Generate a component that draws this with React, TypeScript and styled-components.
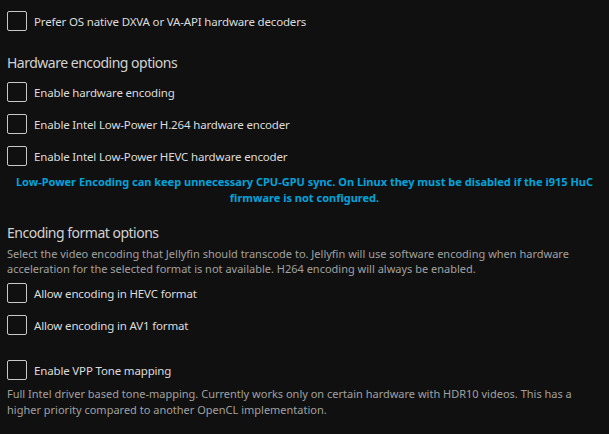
import React from "react";
import styled, { createGlobalStyle } from "styled-components";

const Global = createGlobalStyle`
  html, body { margin: 0; padding: 0; background: #101010; }
  body { font-family: "Noto Sans", "DejaVu Sans", sans-serif; -webkit-font-smoothing: antialiased; }
`;

const Page = styled.div`
  width: 609px;
  height: 434px;
  box-sizing: border-box;
  padding: 5px 7px 0 7px;
  background: #101010;
  overflow: hidden;
`;

const Row = styled.label<{ $mt?: number }>`
  display: flex;
  align-items: center;
  gap: 7px;
  height: 32px;
  margin-top: ${(p) => p.$mt ?? 0}px;
`;

const Box = styled.span`
  box-sizing: border-box;
  width: 20px;
  height: 20px;
  border: 1.5px solid #c8c8c8;
  border-radius: 2px;
  flex: none;
`;

const Label = styled.span`
  font-size: 11.5px;
  letter-spacing: -0.16px;
  color: #dcdcdc;
`;

const Heading = styled.h2<{ $mt: number }>`
  margin: ${(p) => p.$mt}px 0 0 0;
  font-size: 14px;
  letter-spacing: -0.5px;
  line-height: 20px;
  font-weight: 400;
  color: #d2d2d2;
`;

const Notice = styled.div<{ $mt: number }>`
  margin-top: ${(p) => p.$mt}px;
  text-align: center;
  font-size: 11px;
  line-height: 16px;
  font-weight: 700;
  color: #00a4dc;
`;

const Desc = styled.div<{ $mt: number; $lh: number }>`
  margin-top: ${(p) => p.$mt}px;
  font-size: 11px;
  line-height: ${(p) => p.$lh}px;
  color: #a0a0a0;
`;

const Check = ({ text, mt }: { text: string; mt?: number }) => (
  <Row $mt={mt}>
    <Box />
    <Label>{text}</Label>
  </Row>
);

export default function App() {
  return (
    <>
      <Global />
      <Page>
        <Check text="Prefer OS native DXVA or VA-API hardware decoders" />
        <Heading $mt={16}>Hardware encoding options</Heading>
        <Check text="Enable hardware encoding" mt={3} />
        <Check text="Enable Intel Low-Power H.264 hardware encoder" />
        <Check text="Enable Intel Low-Power HEVC hardware encoder" />
        <Notice $mt={2}>
          Low-Power Encoding can keep unnecessary CPU-GPU sync. On Linux they must be disabled if the i915 HuC
          firmware is not configured.
        </Notice>
        <Heading $mt={17}>Encoding format options</Heading>
        <Desc $mt={3} $lh={15}>
          Select the video encoding that Jellyfin should transcode to. Jellyfin will use software encoding when hardware
          acceleration for the selected format is not available. H264 encoding will always be enabled.
        </Desc>
        <Check text="Allow encoding in HEVC format" mt={1} />
        <Check text="Allow encoding in AV1 format" />
        <Check text="Enable VPP Tone mapping" mt={13} />
        <Desc $mt={0} $lh={16}>
          Full Intel driver based tone-mapping. Currently works only on certain hardware with HDR10 videos. This has a
          higher priority compared to another OpenCL implementation.
        </Desc>
      </Page>
    </>
  );
}
